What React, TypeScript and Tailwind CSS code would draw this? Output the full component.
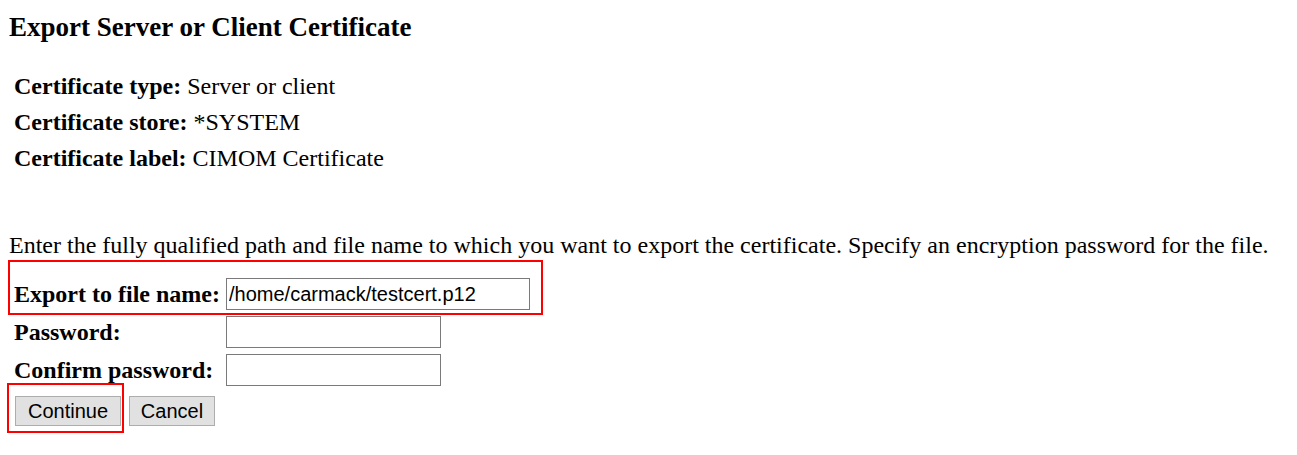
import React from "react";

const serif = "font-['Liberation_Serif','Times_New_Roman',serif]";
const sans = "font-['Liberation_Sans',Tahoma,sans-serif]";

function InfoRow({ label, value }: { label: string; value: string }) {
  return (
    <div className="h-9 flex items-center">
      <span className="font-bold">{label}</span>
      <span>&nbsp;{value}</span>
    </div>
  );
}

function FieldRow({
  label,
  value,
  wide,
}: {
  label: string;
  value?: string;
  wide?: boolean;
}) {
  return (
    <div className="flex items-center h-[38px]">
      <label className="w-[212px] font-bold">{label}</label>
      <input
        type="text"
        defaultValue={value}
        className={`${wide ? "w-[304px]" : "w-[215px]"} h-8 border border-[#7a7a7a] bg-white px-[2px] text-[20px] text-black outline-none ${sans}`}
      />
    </div>
  );
}

export default function App() {
  return (
    <div className={`bg-white text-black text-[24px] leading-none min-h-[455px] pt-[14px] ${serif}`}>
      <h3 className="px-[9px] text-[27px] font-bold h-[26px] flex items-center">
        Export Server or Client Certificate
      </h3>

      <div className="mt-[28px] px-[14px]">
        <InfoRow label="Certificate type:" value="Server or client" />
        <InfoRow label="Certificate store:" value="*SYSTEM" />
        <InfoRow label="Certificate label:" value="CIMOM Certificate" />
      </div>

      <p className="mt-[57px] px-[9px] h-6 flex items-center whitespace-nowrap">
        Enter the fully qualified path and file name to which you want to export the certificate. Specify an encryption password for the file.
      </p>

      <div className="mt-[3px] px-[8px]">
        <div className="w-[535px] h-[55px] border-2 border-[#ff0000] flex items-end pl-[4px]">
          <FieldRow label="Export to file name:" value="/home/carmack/testcert.p12" wide />
        </div>
        <div className="pl-[6px] -mt-[2px]">
          <FieldRow label="Password:" />
          <FieldRow label="Confirm password:" />
        </div>
        <div className="flex items-start gap-[5px] -mt-[6px]">
          <div className="w-[117px] h-[50px] border-2 border-[#ff0000] -ml-[1px] pt-[11px] pl-[6px]">
            <button className={`w-[106px] h-[30px] border border-[#adadad] bg-[#e1e1e1] text-[20px] ${sans}`}>
              Continue
            </button>
          </div>
          <button className={`mt-[13px] w-[86px] h-[30px] border border-[#adadad] bg-[#e1e1e1] text-[20px] ${sans}`}>
            Cancel
          </button>
        </div>
      </div>
    </div>
  );
}
